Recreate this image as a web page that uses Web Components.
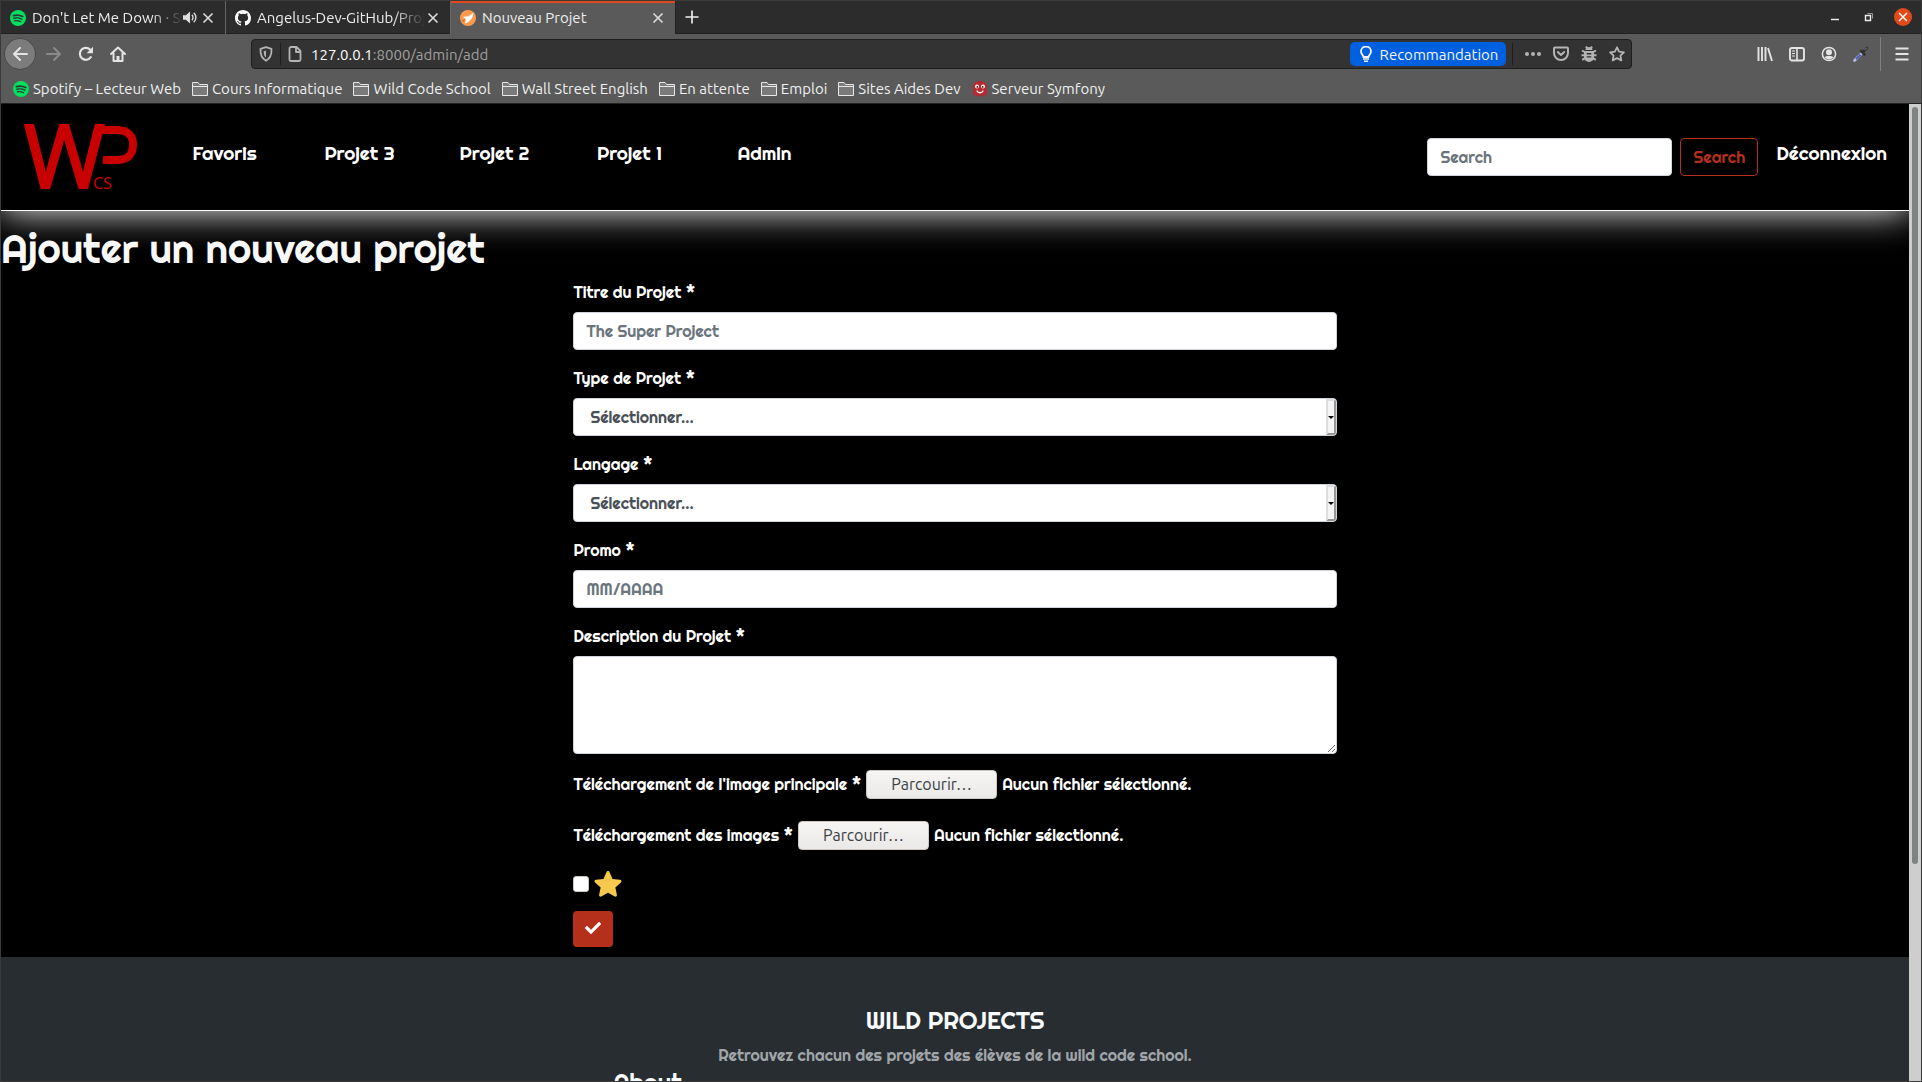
<!DOCTYPE html>
<html lang="fr">
<head>
<meta charset="utf-8">
<title>Nouveau Projet</title>
<meta name="viewport" content="width=device-width, initial-scale=1">
<style>
  html, body { margin: 0; height: 100%; }
  body {
    --ui: Ubuntu, "Noto Sans", sans-serif;
    --site: Righteous, Lato, sans-serif;
    font-family: var(--ui);
    background: #3a3a3a;
    overflow: hidden;
  }
</style>
</head>
<body>
<browser-window>
  <tab-strip slot="tabs">
    <browser-tab icon="spotify" audio>Don't Let Me Down · Stay</browser-tab>
    <browser-tab icon="github">Angelus-Dev-GitHub/Projet</browser-tab>
    <browser-tab icon="compass" active>Nouveau Projet</browser-tab>
  </tab-strip>
  <nav-toolbar slot="toolbar"></nav-toolbar>
  <bookmark-bar slot="bookmarks">
    <bookmark-item icon="spotify">Spotify – Lecteur Web</bookmark-item>
    <bookmark-item icon="folder">Cours Informatique</bookmark-item>
    <bookmark-item icon="folder">Wild Code School</bookmark-item>
    <bookmark-item icon="folder">Wall Street English</bookmark-item>
    <bookmark-item icon="folder">En attente</bookmark-item>
    <bookmark-item icon="folder">Emploi</bookmark-item>
    <bookmark-item icon="folder">Sites Aides Dev</bookmark-item>
    <bookmark-item icon="ghost">Serveur Symfony</bookmark-item>
  </bookmark-bar>
  <site-header></site-header>
  <project-form></project-form>
  <site-footer></site-footer>
</browser-window>

<script>
const ICONS = {
  spotify: '<circle cx="8" cy="8" r="8" fill="#00e05c"/><g fill="none" stroke="#30343a" stroke-linecap="round"><path d="M3.4 5.6c3-.9 6.600-.6 9.300.9" stroke-width="1.700"/><path d="M3.900 8.300c2.700-.7 5.500-.4 7.900.9" stroke-width="1.400"/><path d="M4.300 10.800c2.300-.5 4.400-.2 6.400.9" stroke-width="1.200"/></g>',
  github: '<path fill="#fff" fill-rule="evenodd" d="M8 0C3.580 0 0 3.580 0 8c0 3.540 2.290 6.530 5.470 7.590.4.070.55-.17.55-.38 0-.19-.01-.82-.01-1.490-2.010.37-2.530-.49-2.690-.94-.09-.23-.48-.94-.82-1.130-.28-.15-.68-.52-.01-.53.63-.01 1.080.58 1.230.82.72 1.210 1.870.87 2.330.66.070-.52.28-.87.51-1.070-1.780-.2-3.640-.89-3.640-3.950 0-.87.31-1.590.82-2.150-.08-.2-.36-1.020.08-2.120 0 0 .67-.21 2.200.82a7.600 7.600 0 0 1 4 0c1.530-1.040 2.200-.82 2.200-.82.44 1.100.16 1.920.08 2.120.51.56.82 1.270.82 2.150 0 3.070-1.870 3.750-3.650 3.950.29.25.54.73.54 1.480 0 1.070-.01 1.930-.01 2.200 0 .21.15.46.55.38A8 8 0 0 0 16 8c0-4.420-3.580-8-8-8z"/>',
  compass: '<circle cx="8" cy="8" r="8" fill="#ff9a4d"/><path d="M13.500 2.500C11 6 7 6.500 3 7l3.500 2.500z" fill="#fff"/><path d="M13.500 2.500C13 8 10 12 5 13.500L6 9z" fill="#fff"/><path d="M1.500 10l3.500-.5-1.500 3z" fill="#e26f2a"/>',
  folder: '<path d="M.5 14.500v-13h5.500l1.500 2h8v11z" fill="#7a7a7a" stroke="#e8e8e8"/><path d="M.5 5.500h15" stroke="#e8e8e8"/>',
  ghost: '<path d="M1 15V6c0-3.500 3-6 7-6s7 2.500 7 6v9l-2.300-1.500L10.300 16 8 14l-2.300 2-2.400-2.300z" fill="#b5292f"/><circle cx="5" cy="5.500" r="2" fill="#fff"/><circle cx="11" cy="5.500" r="2" fill="#fff"/><circle cx="5.300" cy="5.900" r=".9" fill="#5a1015"/><circle cx="10.700" cy="5.900" r=".9" fill="#5a1015"/><path d="M5 9.500c.5 3 5.500 3 6 0" fill="none" stroke="#fff" stroke-width="1.300"/>',
  speaker: '<path d="M0 5.500h3L7.500 1.500v13L3 10.500H0z" fill="currentColor"/><path d="M9.500 5c1.500 1.500 1.500 4.500 0 6M11.500 3c3 3 3 7 0 10" fill="none" stroke="currentColor" stroke-width="1.500"/>',
  close: '<path d="M3.500 3.500l9 9M12.500 3.500l-9 9" stroke="currentColor" stroke-width="1.600"/>',
  plus: '<path d="M8 .5v15M.5 8h15" stroke="currentColor" stroke-width="1.900"/>',
  back: '<path d="M15 8H2M8 2L2 8l6 6" fill="none" stroke="currentColor" stroke-width="2" stroke-linecap="round" stroke-linejoin="round"/>',
  forward: '<path d="M1 8h13M8 2l6 6-6 6" fill="none" stroke="currentColor" stroke-width="2" stroke-linecap="round" stroke-linejoin="round"/>',
  reload: '<path d="M12.800 11.200A6 6 0 1 1 12.500 4" fill="none" stroke="currentColor" stroke-width="2.200" stroke-linecap="round"/><path d="M15 .8v6.400H8.600z" fill="currentColor"/>',
  home: '<path d="M1 8l7-6.500L15 8M3.500 7v8h9V7" fill="none" stroke="currentColor" stroke-width="2" stroke-linecap="round" stroke-linejoin="round"/><path d="M6.500 15v-5h3v5z" fill="currentColor"/>',
  shield: '<path d="M8 1.200l5.500 1.600c.3 5.700-1.200 9.700-5.500 12-4.300-2.300-5.800-6.300-5.500-12z" fill="none" stroke="currentColor" stroke-width="1.800" stroke-linejoin="round"/><path d="M8 4.500l-2.300.7c0 3 .6 5.200 2.300 6.500z" fill="currentColor"/>',
  page: '<path d="M3 1h6.500L13.500 5v8.500A1.500 1.500 0 0 1 12 15H4a1.500 1.500 0 0 1-1.500-1.500v-11A1.500 1.500 0 0 1 4 1M9 1.500V6h4" fill="none" stroke="currentColor" stroke-width="1.800" stroke-linejoin="round"/>',
  bulb: '<path d="M5.500 11C5.500 9 3 8.500 3 5.500a5 5 0 0 1 10 0C13 8.500 10.500 9 10.500 11z" fill="none" stroke="currentColor" stroke-width="1.800"/><path d="M5 13h6M6 15.200h4" stroke="currentColor" stroke-width="1.600"/>',
  dots: '<g fill="currentColor"><circle cx="2" cy="8" r="2"/><circle cx="8" cy="8" r="2"/><circle cx="14" cy="8" r="2"/></g>',
  pocket: '<path d="M2 1.500h12a1 1 0 0 1 1 1V7a7 7 0 0 1-14 0V2.500a1 1 0 0 1 1-1z" fill="none" stroke="currentColor" stroke-width="2"/><path d="M4.800 6l3.200 3 3.200-3" fill="none" stroke="currentColor" stroke-width="2" stroke-linecap="round" stroke-linejoin="round"/>',
  bug: '<path d="M4.500 4a3.500 3 0 0 1 7 0z" fill="currentColor"/><path d="M3 5h10v6a5 5 0 0 1-10 0z" fill="currentColor"/><path d="M1 4.500l3 1.700M15 4.500l-3 1.700M.5 9.200h15M1.200 13.800L4 12.200M14.800 13.800L12 12.200M5 .5L6.200 2.500M11 .5L9.800 2.500" stroke="currentColor" stroke-width="2"/><path d="M5.700 7.700h4.600M5.700 10.900h4.600" stroke="#333" stroke-width="1.400"/>',
  star: '<path d="M8 1.300l2.100 4.400 4.800.6-3.500 3.300.9 4.800L8 12.100l-4.300 2.300.9-4.800L1.100 6.300l4.800-.6z" fill="none" stroke="currentColor" stroke-width="1.800" stroke-linejoin="round"/>',
  library: '<path d="M1.500 1v14M5 1v14M8.500 1v14M11 2l4 13" stroke="currentColor" stroke-width="1.900"/>',
  sidebar: '<rect x="1" y="2" width="14" height="12.500" rx="2" fill="none" stroke="currentColor" stroke-width="1.900"/><path d="M8 2v12" stroke="currentColor" stroke-width="1.600"/><path d="M3 5h3M3 7.500h3M3 10h3" stroke="currentColor" stroke-width="1.200"/>',
  account: '<circle cx="8" cy="8" r="6.600" fill="none" stroke="currentColor" stroke-width="1.500"/><circle cx="8" cy="6.200" r="3" fill="currentColor"/><path d="M3.500 11c1.200-1.500 7.800-1.500 9 0-2 3.300-7 3.300-9 0z" fill="currentColor"/>',
  dropper: '<path d="M1.500 14.500L9 7" stroke="#b9bfe0" stroke-width="2.600" stroke-linecap="round"/><path d="M3 13.200L7.500 8.700" stroke="#4350c8" stroke-width="1.800"/><path d="M8 5l3.500 3.500M10.500 5.500l3.300-3.300" stroke="#333" stroke-width="2.600" stroke-linecap="round"/><path d="M11.500 4l2-2" stroke="#888"/>',
  menu: '<path d="M1.500 2.500h13M1.500 8h13M1.500 13.500h13" stroke="currentColor" stroke-width="2.200"/>',
  minimize: '<path d="M4 10.500h8" stroke="currentColor" stroke-width="1.400"/>',
  restore: '<path d="M4.500 6.500h5v5h-5z" fill="none" stroke="currentColor" stroke-width="1.400"/><path d="M6.500 4.500h5v5" fill="none" stroke="#999"/>',
  gold: '<path d="M8 .6c.4 0 .7.300.9.700l1.700 3.900 4.300.4c.8.100 1.100 1 .5 1.500l-3.200 2.900.9 4.300c.1.700-.6 1.200-1.200.9L8 13l-3.900 2.200c-.6.300-1.300-.2-1.200-.9l.9-4.300L.6 7.100C0 6.600.3 5.700 1.100 5.600l4.300-.4 1.700-3.900c.2-.4.5-.7.900-.7z" fill="#f6c94e"/>',
  check: '<path transform="scale(.03125)" d="M173.898 439.404l-166.400-166.400c-9.997-9.997-9.997-26.206 0-36.204l36.203-36.204c9.997-9.998 26.207-9.998 36.204 0L192 312.690 432.095 72.596c9.997-9.997 26.207-9.997 36.204 0l36.203 36.204c9.997 9.997 9.997 26.206 0 36.204l-294.400 294.401c-9.998 9.997-26.207 9.997-36.204-.001z" fill="currentColor"/>'
};

class Base extends HTMLElement {
  connectedCallback() {
    if (this.shadowRoot) return;
    this.attachShadow({ mode: 'open' }).innerHTML = this.view();
    this.ready();
  }
  ready() {}
}

customElements.define('ui-icon', class extends Base {
  view() {
    const size = this.getAttribute('size') || 16;
    return `<style>:host{display:block;flex:none}svg{display:block}</style>
      <svg width="${size}" height="${size}" viewBox="0 0 16 16" aria-hidden="true">${ICONS[this.getAttribute('name')]}</svg>`;
  }
});

customElements.define('browser-window', class extends Base {
  view() {
    return `<style>
      :host{display:flex;flex-direction:column;height:100vh;box-sizing:border-box;border:1px solid #3a3a3a}
      .chrome{background:#5a5a5a;border-bottom:1px solid #222;flex:none}
      .view{flex:1;min-height:0;display:flex;background:#000}
      .page{flex:1;min-width:0;overflow:hidden;display:flex;flex-direction:column;font-family:var(--site)}
    </style>
    <div class="chrome"><slot name="tabs"></slot><slot name="toolbar"></slot><slot name="bookmarks"></slot></div>
    <div class="view"><div class="page"><slot></slot></div><page-scrollbar></page-scrollbar></div>`;
  }
});

customElements.define('page-scrollbar', class extends Base {
  view() {
    return `<style>
      :host{display:block;width:12px;flex:none;box-sizing:border-box;padding:3px;background:#cecece}
      div{height:78%;border-radius:3px;background:#7f8382}
    </style><div></div>`;
  }
});

customElements.define('tab-strip', class extends Base {
  view() {
    return `<style>
      :host{display:flex;height:33px;background:#2c2c2c;color:#eee;box-sizing:border-box;border-bottom:1px solid #202020}
      .tabs{display:flex}
      button{all:unset;display:grid;place-items:center;color:#eee}
      .new{width:32px}
      .controls{margin-left:auto;display:flex;align-items:center;padding-right:9px;gap:16px}
      .controls button{width:18px;height:18px}
      .controls .quit{background:#e2491a;border-radius:50%;color:#fff}
    </style>
    <div class="tabs"><slot></slot></div>
    <button class="new" aria-label="Nouvel onglet"><ui-icon name="plus" size="14"></ui-icon></button>
    <div class="controls">
      <button aria-label="Réduire"><ui-icon name="minimize"></ui-icon></button>
      <button aria-label="Restaurer"><ui-icon name="restore"></ui-icon></button>
      <button class="quit" aria-label="Fermer"><ui-icon name="close" size="14"></ui-icon></button>
    </div>`;
  }
});

customElements.define('browser-tab', class extends Base {
  view() {
    return `<style>
      :host{display:flex;align-items:center;width:225px;height:33px;box-sizing:border-box;padding:0 9px;
        border-right:1px solid #666;font-size:15px;line-height:20px}
      :host([active]){background:#5a5a5a;border-right-color:#222;box-shadow:inset 0 2px #e2491a}
      .title{flex:1;min-width:0;margin-left:6px;overflow:hidden;white-space:nowrap;
        -webkit-mask:linear-gradient(to left,transparent,#000 32px);mask:linear-gradient(to left,transparent,#000 32px)}
      :host([active]) .title{-webkit-mask:none;mask:none}
      button{all:unset;color:#ddd}
      .end{display:flex;gap:2px}
    </style>
    <ui-icon name="${this.getAttribute('icon')}"></ui-icon>
    <span class="title"><slot></slot></span>
    <span class="end">
    ${this.hasAttribute('audio') ? '<button aria-label="Couper le son"><ui-icon name="speaker" size="15"></ui-icon></button>' : ''}
    <button aria-label="Fermer l'onglet"><ui-icon name="close"></ui-icon></button></span>`;
  }
});

customElements.define('nav-toolbar', class extends Base {
  view() {
    const b = (n, l, c = '') => `<button class="${c}" aria-label="${l}"><ui-icon name="${n}"></ui-icon></button>`;
    return `<style>
      :host{display:flex;align-items:center;height:40px;color:#e4e4e4;padding:0 3px}
      button{all:unset;display:grid;place-items:center;width:32px;height:32px}
      .nav{display:flex;width:247px;flex:none}
      .back{background:#7c7c7c;border-radius:50%;box-shadow:inset 0 0 0 1px #484848;margin-right:2px}
      .fwd{color:#8b8b8b}
      .url{display:flex;align-items:center;flex:1;height:30px;box-sizing:border-box;background:#333;border:1px solid #1e1e1e;
        border-radius:4px;color:#b4b4b4;font-size:15px}
      .url button{width:28px;height:28px}
      .field{position:relative;flex:1;display:flex;align-items:center;height:28px}
      .field input{all:unset;flex:1;min-width:0;color:transparent;caret-color:#fff;height:28px}
      .addr{position:absolute;left:2px;top:0;line-height:30px;color:#a0a0a0;pointer-events:none}
      .addr b{font-weight:400;color:#fff}
      .bar{width:1px;height:22px;background:#1e1e1e}
      .url .rec{display:flex;gap:6px;align-items:center;justify-content:center;width:156px;height:24px;background:#0060df;color:#f4f4f8;border-radius:5px;margin-right:6px}
      .actions{display:flex;padding-left:6px}
      .right{display:flex;margin-left:117px;align-items:center}
      .sep{width:1px;height:34px;background:#808080;margin:0 5px 0 3px}
    </style>
    <div class="nav">${b('back','Précédent','back')}${b('forward','Suivant','fwd')}${b('reload','Actualiser')}${b('home','Accueil')}</div>
    <div class="url">${b('shield','Protection')}<span class="bar"></span>${b('page','Informations du site')}
      <div class="field"><input type="text" aria-label="Adresse"><span class="addr"><b>127.0.0.1</b>:8000/admin/add</span></div>
      <button class="rec"><ui-icon name="bulb"></ui-icon>Recommandation</button><span class="bar"></span>
      <div class="actions">${b('dots','Actions')}${b('pocket','Pocket')}${b('bug','Débogage')}${b('star','Marquer cette page')}</div>
    </div>
    <div class="right">${b('library','Bibliothèque')}${b('sidebar','Panneau')}${b('account','Compte')}${b('dropper','Pipette')}<span class="sep"></span>${b('menu','Menu')}</div>`;
  }
});

customElements.define('bookmark-bar', class extends Base {
  view() {
    return `<style>:host{display:flex;gap:11px;height:29px;align-items:center;padding-left:12px;color:#f0f0f0;font-size:15px;line-height:20px}</style><slot></slot>`;
  }
});

customElements.define('bookmark-item', class extends Base {
  view() {
    return `<style>:host{display:block}a{display:flex;gap:4px;align-items:center;color:inherit;text-decoration:none;white-space:nowrap}</style>
      <a href="#"><ui-icon name="${this.getAttribute('icon')}"></ui-icon><slot></slot></a>`;
  }
});

customElements.define('site-header', class extends Base {
  view() {
    const links = ['Favoris', 'Projet 3', 'Projet 2', 'Projet 1', 'Admin'].map(t => `<a href="#">${t}</a>`).join('');
    return `<style>
      :host{display:flex;height:106px;flex:none;border-bottom:1px solid #fff;background:#000;
        box-shadow:0 0 35px #fff;font-size:19px;line-height:28px;padding-right:22px}
      svg{display:block;width:156px;height:106px;flex:none;overflow:visible}
      nav{display:flex;align-items:flex-start;padding-top:35px}
      nav a{width:135px;text-align:center}
      a{color:#fff;text-decoration:none}
      form{display:flex;gap:8px;margin:34px 18px 0 auto}
      input,button{box-sizing:border-box;height:38px;font:16px/24px var(--site);border-radius:4px;padding:0 12px;margin:0}
      input{width:245px;border:1px solid #ced4da;background:#fff;color:#495057}
      input::placeholder{color:#6c757d;opacity:1}
      button{width:78px;background:none;border:1px solid #b5301b;color:#b5301b}
      .out{padding-top:35px}
    </style>
    <svg viewBox="0 0 156 106" role="img" aria-label="WP CS">
      <g fill="#c80000" font-family="Noto Sans, sans-serif">
        <text x="23" y="84" font-size="87" stroke="#c80000" stroke-width="2">W</text>
        <text x="92" y="85" font-size="16">CS</text>
      </g>
      <path d="M98 26H116C129 26 132 34 132 40C132 53 125 56 115 56H102" fill="none" stroke="#c80000" stroke-width="8"/>
    </svg>
    <nav>${links}</nav>
    <form><input type="search" placeholder="Search" aria-label="Search"><button type="button">Search</button></form>
    <div class="out"><a href="#">Déconnexion</a></div>`;
  }
});

customElements.define('form-field', class extends Base {
  view() {
    const kind = this.getAttribute('kind'), ph = this.getAttribute('placeholder') || '';
    const control = {
      text: `<input id="c" type="text" placeholder="${ph}">`,
      select: `<div class="sel"><select id="c"><option>Sélectionner...</option></select><span class="arrow"></span></div>`,
      area: `<textarea id="c" rows="3"></textarea>`
    }[kind];
    return `<style>
      :host{display:block;margin-bottom:16px}
      label{display:block;margin-bottom:8px;line-height:24px}
      input,select,textarea{display:block;width:100%;box-sizing:border-box;height:38px;padding:0 12px;margin:0;appearance:none;
        font:inherit;line-height:24px;color:#495057;background:#fff;border:1px solid #ced4da;border-radius:4px}
      select{padding:0 16px}
      textarea{height:98px;padding:6px 12px;resize:vertical}
      ::placeholder{color:#6c757d;opacity:1}
      .sel{position:relative}
      .arrow{position:absolute;top:1px;right:1px;bottom:1px;width:10px;box-sizing:border-box;border:2px solid;border-color:#dcdfe2 #949698 #949698 #dcdfe2;
        border-radius:0 3px 3px 0;background:#f4f4f4;pointer-events:none;display:grid;place-items:center}
      .arrow::before{content:"";border:3px solid transparent;border-top-color:#000;border-bottom:0}
    </style>
    <label for="c">${this.getAttribute('label')}</label>${control}`;
  }
});

customElements.define('file-field', class extends Base {
  view() {
    return `<style>
      :host{display:flex;align-items:center;gap:5px;height:29px;margin-bottom:22px;white-space:nowrap}
      label,span{line-height:24px;padding-bottom:2px}
      button{box-sizing:border-box;width:131px;height:29px;padding:0 0 2px;border:1px solid #cdc7c2;border-radius:4px;color:#3a4044;
        background:linear-gradient(#f6f5f4,#ebe9e7);font:16px/24px var(--ui)}
    </style>
    <label for="f">${this.getAttribute('label')}</label>
    <input id="f" type="file" hidden>
    <button type="button">Parcourir…</button><span>Aucun fichier sélectionné.</span>`;
  }
  ready() {
    const r = this.shadowRoot;
    r.querySelector('button').onclick = () => r.querySelector('input').click();
  }
});

customElements.define('project-form', class extends Base {
  view() {
    return `<style>
      :host{display:block;flex:none;color:#fff;font-size:16px;padding-top:14px}
      h1{margin:0 0 7px;font-size:40px;line-height:48px;font-weight:400;color:#f8f8f8}
      form{width:40%;margin:0 auto;padding-bottom:10px}
      .fav{display:flex;align-items:center;gap:5px;height:28px;margin:-2px 0 13px}
      .fav input{appearance:none;width:16px;height:16px;margin:0;background:#fff;border:1px solid #cdc7c2;border-radius:3px}
      .go{display:grid;place-items:center;box-sizing:border-box;width:40px;height:36px;padding:0 0 2px;border:0;border-radius:4px;background:#b5301b;color:#fff}
    </style>
    <h1>Ajouter un nouveau projet</h1>
    <form>
      <form-field kind="text" label="Titre du Projet *" placeholder="The Super Project"></form-field>
      <form-field kind="select" label="Type de Projet *"></form-field>
      <form-field kind="select" label="Langage *"></form-field>
      <form-field kind="text" label="Promo *" placeholder="MM/AAAA"></form-field>
      <form-field kind="area" label="Description du Projet *"></form-field>
      <file-field label="Téléchargement de l'image principale *"></file-field>
      <file-field label="Téléchargement des images *"></file-field>
      <div class="fav"><input id="fav" type="checkbox"><label for="fav" aria-label="Favori"><ui-icon name="gold" size="28"></ui-icon></label></div>
      <button class="go" type="button" aria-label="Valider"><ui-icon name="check"></ui-icon></button>
    </form>`;
  }
});

customElements.define('site-footer', class extends Base {
  view() {
    return `<style>
      :host{display:block;flex:1 0 auto;background:#282d31;color:#f8fbfd;text-align:center;padding-top:48px}
      h2{margin:0 0 8px;font-size:24px;line-height:30px;font-weight:400}
      p{margin:0;font-size:16px;line-height:24px;color:#a0a5a9}
      .cols{display:flex;justify-content:center}
      .cols h2{width:67px;margin-right:616px}
    </style>
    <h2>WILD PROJECTS</h2>
    <p>Retrouvez chacun des projets des élèves de la wild code school.</p>
    <div class="cols"><h2>About</h2></div>`;
  }
});
</script>
</body>
</html>
